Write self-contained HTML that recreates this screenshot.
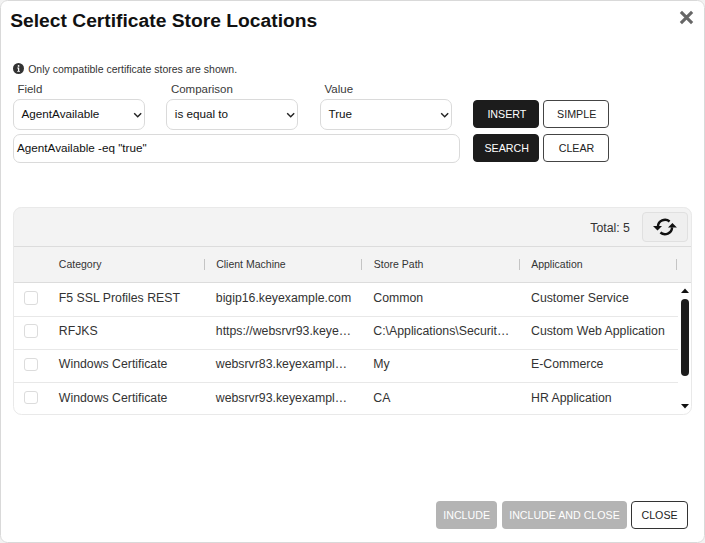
<!DOCTYPE html>
<html><head><meta charset="utf-8">
<style>
*{box-sizing:border-box;margin:0;padding:0}
html,body{width:705px;height:543px;overflow:hidden;background:#f2f2f2;font-family:"Liberation Sans",sans-serif;color:#222}
.a{position:absolute}
.t{position:absolute;white-space:nowrap;line-height:1}
.dlg{left:0;top:0;width:705px;height:543px;background:#fff;border-radius:7.5px}
.dlgb{left:0;top:0;width:705px;height:543px;border:1px solid #d9d9d9;border-radius:7.5px}
.lbl{font-size:11.5px;color:#3a3a3a;top:84.1px}
.sel{top:98.9px;height:30.8px;width:131.5px;border:1px solid #dadada;border-radius:7px;background:#fff}
.chev{top:111.5px}
.st{font-size:11.7px;color:#111;top:108.4px}
.btn{height:27.5px;width:66px;border-radius:4px;border:1.4px solid #444}
.dark{background:#1c1c1c;border-color:#1c1c1c}
.light{background:#fff}
.bt{font-size:10.7px}
.rt{font-size:12.3px;color:#333}
.ht{font-size:10.5px;color:#333;top:258.7px}
.cb{left:24px;width:13.5px;height:13.5px;border:1px solid #dcdcdc;border-radius:3px;background:#fff}
.sep{width:1.2px;height:11px;background:#c4c4c4;top:258.5px}
.rs{left:14px;width:664px;height:1px;background:#e8e8e8}
.fb{top:501.4px;height:28px;border-radius:4px}
.dis{background:#b4b4b4}
.ft{font-size:10.65px;top:510px}
</style></head><body>
<div class="a dlg"></div>

<div class="t" style="left:10.2px;top:10.8px;font-size:19.25px;font-weight:bold;color:#111">Select Certificate Store Locations</div>
<svg class="a" style="left:678.75px;top:9.75px" width="15" height="15" viewBox="0 0 15 15"><path d="M1.9 1.9L13.1 13.1M13.1 1.9L1.9 13.1" stroke="#666" stroke-width="3.1"/></svg>

<svg class="a" style="left:12.9px;top:63.2px" width="11" height="11" viewBox="0 0 12 12"><circle cx="6" cy="6" r="6" fill="#333"/><path d="M4.6 5h2.2v3.6h0.8v1h-3v-1h0.8v-2.6h-0.8z" fill="#fff"/><circle cx="6.1" cy="3.2" r="1" fill="#fff"/></svg>
<div class="t" style="left:28.2px;top:63.6px;font-size:10.5px;color:#333">Only compatible certificate stores are shown.</div>

<div class="t lbl" style="left:17.4px">Field</div>
<div class="t lbl" style="left:170.9px">Comparison</div>
<div class="t lbl" style="left:324.5px">Value</div>

<div class="a sel" style="left:13.3px"></div>
<div class="a sel" style="left:166.4px"></div>
<div class="a sel" style="left:320.3px"></div>
<svg class="a chev" style="left:132.5px" width="10" height="7" viewBox="0 0 10 7"><path d="M1.2 1.2L4.7 4.7L8.2 1.2" stroke="#222" stroke-width="1.45" fill="none"/></svg>
<svg class="a chev" style="left:285.6px" width="10" height="7" viewBox="0 0 10 7"><path d="M1.2 1.2L4.7 4.7L8.2 1.2" stroke="#222" stroke-width="1.45" fill="none"/></svg>
<svg class="a chev" style="left:439.6px" width="10" height="7" viewBox="0 0 10 7"><path d="M1.2 1.2L4.7 4.7L8.2 1.2" stroke="#222" stroke-width="1.45" fill="none"/></svg>
<div class="t st" style="left:21.5px">AgentAvailable</div>
<div class="t st" style="left:174.8px">is equal to</div>
<div class="t st" style="left:328.5px">True</div>

<div class="a" style="left:13.3px;top:134px;width:446.5px;height:28.7px;border:1px solid #dadada;border-radius:7px"></div>
<div class="t" style="left:17px;top:141.8px;font-size:11.7px;color:#111">AgentAvailable -eq "true"</div>

<div class="a btn dark" style="left:473.4px;top:100.3px"></div>
<div class="a btn light" style="left:543px;top:100.3px"></div>
<div class="a btn dark" style="left:473.4px;top:134.2px"></div>
<div class="a btn light" style="left:543px;top:134.2px"></div>
<div class="t bt" style="left:487.4px;top:108.7px;color:#fff">INSERT</div>
<div class="t bt" style="left:557.1px;top:108.7px;color:#222">SIMPLE</div>
<div class="t bt" style="left:484.4px;top:142.7px;color:#fff">SEARCH</div>
<div class="t bt" style="left:558.7px;top:142.7px;color:#222">CLEAR</div>

<!-- table -->
<div class="a" style="left:13.3px;top:207px;width:679.2px;height:208px;border-radius:8.5px;overflow:hidden;background:#fff">
  <div class="a" style="left:0;top:0;width:100%;height:75.5px;background:#f3f3f3"></div>
</div>
<div class="a" style="left:13.3px;top:245.5px;width:678px;height:1px;background:#dcdcdc"></div>
<div class="a" style="left:13.3px;top:282px;width:678px;height:1px;background:#dcdcdc"></div>
<div class="a" style="left:13.3px;top:207px;width:679.2px;height:208px;border:1px solid #e9e9e9;border-radius:8.5px"></div>

<div class="t rt" style="left:590.3px;top:221.8px">Total: 5</div>
<div class="a" style="left:641.8px;top:212px;width:45.9px;height:29.6px;border:1px solid #e0e0e0;border-radius:4px;background:#efefef"></div>
<svg class="a" style="left:648px;top:212px" width="34" height="30" viewBox="0 0 34 30"><path d="M21.6 9.5A7.1 7.1 0 0 0 9.9 14.6M12.4 20.5A7.1 7.1 0 0 0 24.1 15.4" stroke="#111" stroke-width="2.4" fill="none"/><path d="M5 14.1H14L9.5 18.5Z M20 15.6H28.9L24.4 11.1Z" fill="#111"/></svg>

<div class="t ht" style="left:58.8px">Category</div>
<div class="a sep" style="left:203.5px"></div>
<div class="t ht" style="left:216.2px">Client Machine</div>
<div class="a sep" style="left:361px"></div>
<div class="t ht" style="left:373.8px">Store Path</div>
<div class="a sep" style="left:518.7px"></div>
<div class="t ht" style="left:531.2px">Application</div>
<div class="a sep" style="left:676px"></div>

<div class="a cb" style="top:291px"></div>
<div class="a cb" style="top:324.3px"></div>
<div class="a cb" style="top:357.6px"></div>
<div class="a cb" style="top:390.9px"></div>
<div class="a rs" style="top:315.8px"></div>
<div class="a rs" style="top:349.1px"></div>
<div class="a rs" style="top:382.4px"></div>

<div class="t rt" style="left:58.8px;top:291.6px">F5 SSL Profiles REST</div>
<div class="t rt" style="left:215.8px;top:291.6px">bigip16.keyexample.com</div>
<div class="t rt" style="left:373.3px;top:291.6px">Common</div>
<div class="t rt" style="left:531px;top:291.6px">Customer Service</div>

<div class="t rt" style="left:58.8px;top:324.9px">RFJKS</div>
<div class="t rt" style="left:215.8px;top:324.9px">https://websrvr93.keye…</div>
<div class="t rt" style="left:373.3px;top:324.9px">C:\Applications\Securit…</div>
<div class="t rt" style="left:531px;top:324.9px">Custom Web Application</div>

<div class="t rt" style="left:58.8px;top:358.2px">Windows Certificate</div>
<div class="t rt" style="left:215.8px;top:358.2px">websrvr83.keyexampl…</div>
<div class="t rt" style="left:373.3px;top:358.2px">My</div>
<div class="t rt" style="left:531px;top:358.2px">E-Commerce</div>

<div class="t rt" style="left:58.8px;top:391.5px">Windows Certificate</div>
<div class="t rt" style="left:215.8px;top:391.5px">websrvr93.keyexampl…</div>
<div class="t rt" style="left:373.3px;top:391.5px">CA</div>
<div class="t rt" style="left:531px;top:391.5px">HR Application</div>

<!-- scrollbar -->
<svg class="a" style="left:681px;top:288px" width="8" height="5" viewBox="0 0 8 5"><path d="M0 5L4 0.5L8 5Z" fill="#111"/></svg>
<div class="a" style="left:681.2px;top:299.3px;width:7.7px;height:77px;border-radius:4px;background:#1c1c1c"></div>
<svg class="a" style="left:681px;top:403.8px" width="8" height="5" viewBox="0 0 8 5"><path d="M0 0L4 4.5L8 0Z" fill="#111"/></svg>

<!-- footer -->
<div class="a fb dis" style="left:435.9px;width:61px"></div>
<div class="a fb dis" style="left:502.3px;width:124.3px"></div>
<div class="a fb" style="left:631.1px;width:56.6px;border:1.3px solid #333;background:#fff"></div>
<div class="t ft" style="left:443.3px;color:#fff">INCLUDE</div>
<div class="t ft" style="left:509.2px;color:#fff">INCLUDE AND CLOSE</div>
<div class="t ft" style="left:641.5px;color:#222">CLOSE</div>

<div class="a dlgb"></div>
</body></html>
